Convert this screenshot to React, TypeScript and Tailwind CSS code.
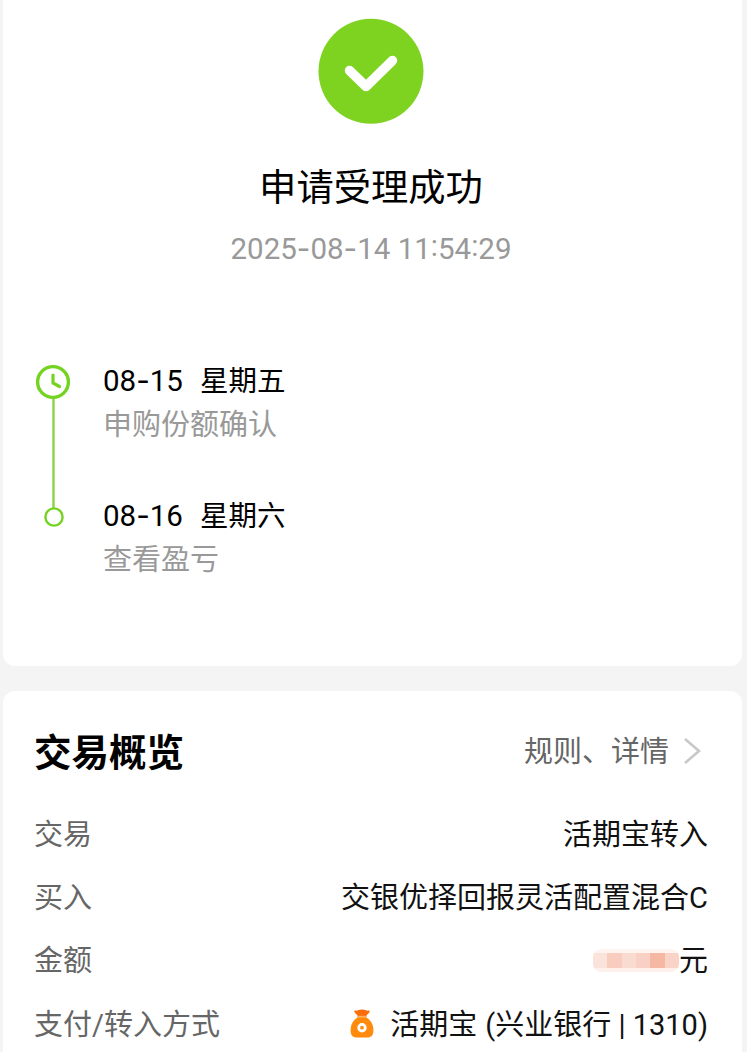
import React from "react";

const steps = [
  { date: "08-15", day: "星期五", text: "申购份额确认" },
  { date: "08-16", day: "星期六", text: "查看盈亏" },
];

const mosaic = [
  "bg-[#fae3db]",
  "bg-[#f8cdbf]",
  "bg-[#f9dbd0]",
  "bg-[#f8d1c4]",
  "bg-[#f4b8a3]",
  "bg-[#f8d3c6]",
];

const SuccessIcon = () => (
  <svg className="w-[106px] h-[106px]" viewBox="0 0 106 106" fill="none">
    <circle cx="53" cy="53.3" r="52.5" fill="#7ed321" />
    <path
      d="M31.5 52.5L48 68.5L74.5 42.5"
      stroke="#fff"
      strokeWidth="9.5"
      strokeLinecap="round"
      strokeLinejoin="round"
    />
  </svg>
);

const TimelineIcon = () => (
  <svg className="w-9 h-[164px]" viewBox="0 0 36 164" fill="none">
    <path d="M18.5 35V144" stroke="#8bd14a" strokeWidth="2.4" />
    <circle cx="18" cy="18" r="15.4" stroke="#74d321" strokeWidth="3.4" />
    <path
      d="M18 11V19L24.5 22.5"
      stroke="#74d321"
      strokeWidth="3.2"
      strokeLinecap="round"
      strokeLinejoin="round"
    />
    <circle cx="19" cy="153" r="8.6" stroke="#74d321" strokeWidth="2.4" />
  </svg>
);

const MoneyBagIcon = () => (
  <svg className="w-6 h-[29px] -mt-1" viewBox="0 0 24 29" fill="none">
    <path
      d="M5.4 1.6C7.3 2.2 8.3 0.6 12 0.6C15.7 0.6 16.7 2.2 18.6 1.6C19.8 1.3 20 2.5 19.3 3.4L16.5 6.5V8H7.5V6.5L4.7 3.4C4 2.5 4.2 1.3 5.4 1.6Z"
      fill="#fb6d0b"
    />
    <path d="M7.8 6.8H16.2V9H7.8Z" fill="#ffb066" />
    <path
      d="M7.5 8.6H16.5C20.5 11 23.4 15.5 23.4 21C23.4 26.5 21.5 28.5 17 28.5H7C2.5 28.5 0.6 26.5 0.6 21C0.6 15.5 3.5 11 7.5 8.6Z"
      fill="#ff8a0c"
    />
    <circle cx="12" cy="18.7" r="3.3" stroke="#fff" strokeWidth="2.8" />
  </svg>
);

// digits with a wide dash and a raised colon between them
const DateText = ({ value }: { value: string }) => (
  <>
    {value.split(/([-:])/).map((part, i) => {
      if (part === "-") {
        return (
          <span key={i} className="font-['Inter']">
            -
          </span>
        );
      }
      if (part === ":") {
        return (
          <span key={i} className="relative -top-[3px]">
            :
          </span>
        );
      }
      return <React.Fragment key={i}>{part}</React.Fragment>;
    })}
  </>
);

interface IRow {
  label: string;
  children: React.ReactNode;
}
const Row = ({ label, children }: IRow) => {
  return (
    <div className="flex items-center justify-between h-[63.3px] text-[29px] whitespace-nowrap">
      <span className="text-[#666]">{label}</span>
      <div className="flex items-center text-[#111]">{children}</div>
    </div>
  );
};

export default function App() {
  return (
    <div className="w-[747px] h-[1052px] overflow-hidden bg-[#f4f4f4] pl-[3px] pr-[5px] font-['Roboto','Noto_Sans_CJK_SC',sans-serif]">
      <div className="h-[666px] bg-white rounded-b-xl flex flex-col items-center pt-[18px]">
        <div className="flex flex-col items-center pr-[3px]">
          <SuccessIcon />
          <div className="mt-10 h-12 leading-[48px] text-[37.3px] text-black">
            申请受理成功
          </div>
          <div className="mt-4 h-10 leading-10 text-[29.5px] text-[#999]">
            <DateText value="2025-08-14 11:54:29" />
          </div>
        </div>
        <div className="w-full flex pl-8 mt-24">
          <TimelineIcon />
          <div className="ml-8">
            {steps.map((step) => (
              <div key={step.date} className="h-[134.5px]">
                <div className="flex h-9 text-[28.5px] text-black">
                  <span className="w-[97px] leading-8 text-[29.5px]">
                    <DateText value={step.date} />
                  </span>
                  <span className="leading-[35px]">{step.day}</span>
                </div>
                <div className="mt-[7px] h-9 leading-9 text-[29px] text-[#999]">{step.text}</div>
              </div>
            ))}
          </div>
        </div>
      </div>

      <div className="mt-[25px] h-[400px] bg-white rounded-t-xl pl-[31px] pr-[34px] pt-[38px]">
        <div className="flex items-center justify-between h-12 mb-[27px]">
          <span className="text-[37.5px] font-bold text-black">交易概览</span>
          <div className="flex items-center text-[29px] text-[#666]">
            规则、详情
            <svg className="w-[18px] h-7 -mt-1 ml-[14px] mr-[7px]" viewBox="0 0 18 28" fill="none">
              <path d="M2 2L16 14L2 26" stroke="#c8c8c8" strokeWidth="2.6" />
            </svg>
          </div>
        </div>
        <Row label="交易">活期宝转入</Row>
        <Row label="买入">交银优择回报灵活配置混合C</Row>
        <Row label="金额">
          <div className="w-[86px] -mt-1 rounded-lg overflow-hidden">
            <div className="h-1 bg-[#fef4f0]" />
            <div className="flex">
              {mosaic.map((color, i) => (
                <div key={i} className={`h-[15px] flex-1 ${color}`} />
              ))}
            </div>
            <div className="h-1 bg-[#fef1ec]" />
          </div>
          元
        </Row>
        <Row label="支付/转入方式">
          <MoneyBagIcon />
          <span className="ml-4">活期宝</span>
          <span className="ml-2">(兴业银行 | 1310)</span>
        </Row>
      </div>
    </div>
  );
}
